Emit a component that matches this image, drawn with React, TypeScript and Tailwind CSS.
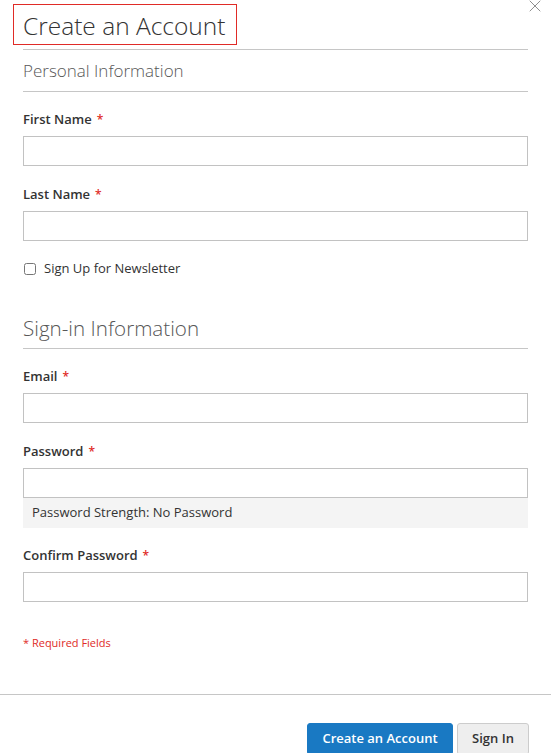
import { X } from "lucide-react"

function Label({ text }: { text: string }) {
    return (
        <div className="flex items-center h-[20px] text-[13px] font-semibold text-[#333]">
            {text}
            <span className="text-[#e02b27] text-[12px] ml-[5px]">*</span>
        </div>
    )
}

function Campo({ text, type = "text" }: { text: string, type?: string }) {
    return (
        <div className="flex flex-col">
            <Label text={text} />
            <input type={type} className="mt-[6px] h-[30px] w-full border border-[#c2c2c2] bg-white outline-none px-2" />
        </div>
    )
}

export default function App() {
    return (
        <div className="relative w-[551px] h-[753px] overflow-hidden bg-white text-[#333]" style={{ fontFamily: '"Open Sans", "Noto Sans", sans-serif' }}>
            <button className="absolute right-[6px] top-[-4px] text-[#8f8f8f]">
                <X size={20} strokeWidth={1.2} />
            </button>

            <div className="pt-[4px] pl-[13px]">
                <div className="inline-flex items-center h-[41px] w-[224px] border border-[#e02b27] pl-[9px] whitespace-nowrap">
                    <h1 className="mt-[4px] text-[24.5px] font-light text-[#333] leading-none">Create an Account</h1>
                </div>
            </div>

            <div className="px-[23px]">
                <div className="mt-[4px] border-t border-[#c6c6c6]" />
                <div className="h-[41px] flex items-center text-[17px] font-light text-[#575757]">Personal Information</div>
                <div className="border-t border-[#c6c6c6]" />

                <div className="mt-[18px] flex flex-col gap-[19px]">
                    <Campo text="First Name" />
                    <Campo text="Last Name" />
                </div>

                <label className="mt-[18px] flex items-center gap-[8px] text-[13px] text-[#333]">
                    <input type="checkbox" className="w-[12px] h-[12px] ml-[1px]" />
                    Sign Up for Newsletter
                </label>

                <div className="mt-[35px] h-[30px] flex items-center text-[20.6px] font-light text-[#575757]">Sign-in Information</div>
                <div className="mt-[4px] border-t border-[#c6c6c6]" />

                <div className="mt-[18px] flex flex-col gap-[19px]">
                    <Campo text="Email" type="email" />
                    <div className="flex flex-col">
                        <Campo text="Password" type="password" />
                        <div className="h-[30px] bg-[#f4f4f4] flex items-center px-[9px] text-[13px] text-[#333]">
                            Password Strength: No Password
                        </div>
                    </div>
                </div>
                <div className="mt-[18px]">
                    <Campo text="Confirm Password" type="password" />
                </div>

                <div className="mt-[33px] text-[11px] text-[#e02b27]">* Required Fields</div>
            </div>

            <div className="mt-[43px] border-t border-[#c6c6c6]" />

            <div className="mt-[28px] pr-[22px] flex justify-end gap-[4px]">
                <button className="h-[32px] w-[146px] bg-[#1979c3] border border-[#1979c3] rounded-[3px] text-white text-[13px] font-semibold whitespace-nowrap">
                    Create an Account
                </button>
                <button className="h-[32px] w-[72px] bg-[#eee] border border-[#ccc] rounded-[3px] text-[#333] text-[13px] font-semibold">
                    Sign In
                </button>
            </div>
        </div>
    )
}
